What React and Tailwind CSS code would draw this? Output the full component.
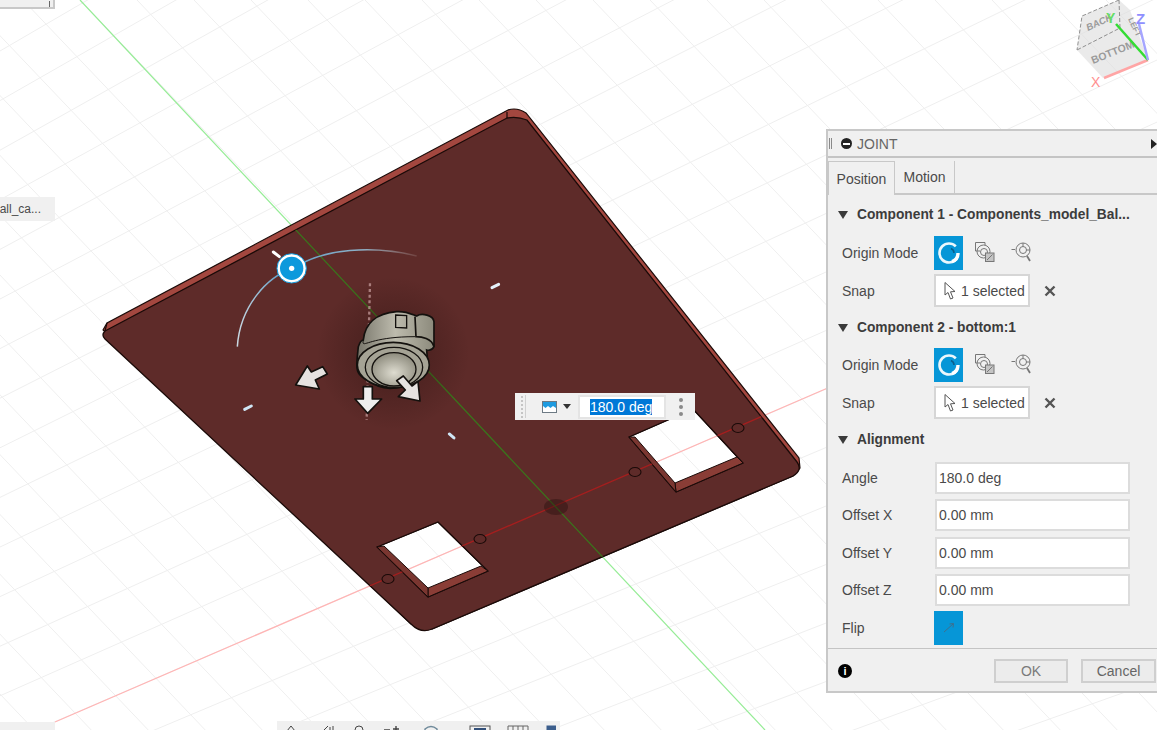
const FONT = "font-['Liberation_Sans',Arial,sans-serif]";

function gridLines() {
  const lines = [];
  // family running up to the right, fans out from a far vanishing point
  for (let k = -3; k < 30; k++) {
    const y0 = 51 + 49.6 * k;
    const slope = (y0 - 2730) / 4600;
    lines.push([0, y0, 1157, y0 + 1157 * slope]);
  }
  // family running down to the right
  for (let k = -16; k < 22; k++) {
    const x0 = 80 + 57 * k;
    lines.push([x0, 0, x0 + 730 / 1.05, 730]);
  }
  return lines;
}

const plateFace =
  "M105 331 L507 118 Q517 116 527 120 L797 462 Q803 470 793 476 L432 629 Q421 634 411 624 L105 339 Q101 335 105 331 Z";
const plateRim =
  "M103 330 L107 323 L508 110 Q517 107 526 113 L799 458 L800 468 L793 476 L432 629 L411 624 Z";
const cutouts =
  " M377 547 L438 522 L488 571 L428 597 Z M629 437 L693 409 L743 463 L676 492 Z";

function Scene() {
  return (
    <svg className="block" width="1157" height="730" viewBox="0 0 1157 730">
      <defs>
        <clipPath id="plateClip">
          <path d={plateFace + cutouts} clipRule="evenodd" />
        </clipPath>
        <radialGradient id="shade" cx="0.5" cy="0.5" r="0.5">
          <stop offset="0%" stopColor="#1c0a08" stopOpacity="0.42" />
          <stop offset="100%" stopColor="#1c0a08" stopOpacity="0" />
        </radialGradient>
        <radialGradient id="partFace" cx="0.5" cy="0.6" r="0.6">
          <stop offset="0%" stopColor="#dedcd0" />
          <stop offset="100%" stopColor="#8c8a7c" />
        </radialGradient>
        <linearGradient id="partBody" x1="0" y1="0" x2="1" y2="0">
          <stop offset="0%" stopColor="#77756a" />
          <stop offset="50%" stopColor="#bdbbad" />
          <stop offset="100%" stopColor="#8c8a7c" />
        </linearGradient>
        <linearGradient id="arcFade" x1="0" y1="0" x2="1" y2="0">
          <stop offset="0%" stopColor="#c9d8e2" />
          <stop offset="25%" stopColor="#5e9cc4" />
          <stop offset="70%" stopColor="#8fb2c8" />
          <stop offset="100%" stopColor="#b9a6a4" stopOpacity="0.2" />
        </linearGradient>
      </defs>

      <rect width="1157" height="730" fill="#ffffff" />
      {gridLines().map(([x1, y1, x2, y2], i) => (
        <line key={i} x1={x1} y1={y1} x2={x2} y2={y2} stroke="#efefef" strokeWidth="1" />
      ))}
      <line x1="55" y1="722" x2="830" y2="387" stroke="#ffb4b4" strokeWidth="1.2" />
      <line x1="80" y1="0" x2="765" y2="730" stroke="#95ec95" strokeWidth="1.2" />

      {/* plate rim, holes stay open so the axis shows through */}
      <path d={plateRim + cutouts} fillRule="evenodd" fill="#a3473f" stroke="#1a0a08" strokeWidth="1.2" />
      <path d={plateFace + cutouts} fillRule="evenodd" fill="#5e2b29" stroke="#1a0a08" strokeWidth="1.3" />
      <path d="M428 597 L428 588 L481 566 L488 571 Z" fill="#8a3d36" stroke="#1a0a08" />
      <path d="M377 547 L384 546 L428 588 L428 597 Z" fill="#7a3630" stroke="#1a0a08" />
      <path d="M676 492 L675 483 L737 457 L743 463 Z" fill="#8a3d36" stroke="#1a0a08" />
      <path d="M629 437 L635 437 L675 483 L676 492 Z" fill="#7a3630" stroke="#1a0a08" />
      <line x1="507" y1="112" x2="507" y2="118" stroke="#1a0a08" strokeWidth="1.2" />
      <line x1="107" y1="323" x2="105" y2="331" stroke="#1a0a08" strokeWidth="1.2" />

      <g clipPath="url(#plateClip)">
        <line x1="55" y1="722" x2="830" y2="387" stroke="#a51e1e" strokeWidth="1.3" />
        <line x1="80" y1="0" x2="765" y2="730" stroke="#39761c" strokeWidth="1.2" />
      </g>

      {/* holes */}
      <ellipse cx="388" cy="579" rx="6" ry="4.5" fill="#5e2b29" stroke="#1a0a08" strokeWidth="1.1" />
      <ellipse cx="480" cy="539" rx="6" ry="4.5" fill="#5e2b29" stroke="#1a0a08" strokeWidth="1.1" />
      <ellipse cx="635" cy="472" rx="6" ry="4.5" fill="#5e2b29" stroke="#1a0a08" strokeWidth="1.1" />
      <ellipse cx="738" cy="428" rx="6" ry="4.5" fill="#5e2b29" stroke="#1a0a08" strokeWidth="1.1" />
      <ellipse cx="556" cy="507" rx="12" ry="8" fill="#2a1210" fillOpacity="0.45" />

      {/* gizmo, drawn in 3x coordinates */}
      <g transform="translate(230 240) scale(0.3333)">
        <circle cx="490" cy="340" r="230" fill="url(#shade)" />
        <path d="M22 320 C30 200 110 110 190 85 C280 25 430 15 560 48" fill="none" stroke="url(#arcFade)" strokeWidth="4.5" />
        <line x1="420" y1="130" x2="410" y2="540" stroke="#c49a9a" strokeWidth="7" strokeDasharray="9 8" opacity="0.75" />
        <path
          d="M400 300 C405 250 440 220 500 215 C530 213 550 225 560 228 C575 218 610 225 612 245 L612 320 C605 335 590 330 590 330 L595 385 C585 420 530 445 480 445 C440 445 410 420 395 410 C375 395 380 370 385 320 C390 305 395 300 400 300 Z"
          fill="url(#partBody)"
          stroke="#14110e"
          strokeWidth="5"
        />
        <path d="M497 225 L530 227 L530 264 L497 262 Z" fill="none" stroke="#14110e" strokeWidth="4" />
        <path d="M555 230 L558 290 C575 290 605 295 612 320" fill="none" stroke="#14110e" strokeWidth="5" />
        <path d="M400 300 C395 330 410 290 555 290" fill="none" stroke="#14110e" strokeWidth="3" />
        <ellipse cx="490" cy="375" rx="108" ry="68" fill="#a5a395" stroke="#14110e" strokeWidth="5" />
        <ellipse cx="492" cy="382" rx="86" ry="60" fill="#a5a395" stroke="#14110e" strokeWidth="4" />
        <ellipse cx="492" cy="388" rx="66" ry="50" fill="url(#partFace)" stroke="#14110e" strokeWidth="4" />

        <path d="M197 435 L232 378 L244 396 L278 380 L292 402 L256 420 L268 447 Z" fill="#e6e3e1" stroke="#14110e" strokeWidth="5" strokeLinejoin="round" />
        <path d="M413 520 L375 477 L400 477 L400 440 L427 440 L427 477 L455 477 Z" fill="#eeeeee" stroke="#14110e" strokeWidth="5" strokeLinejoin="round" />
        <path d="M570 483 L505 470 L526 450 L500 422 L520 408 L546 438 L564 424 Z" fill="#e6e3e1" stroke="#14110e" strokeWidth="5" strokeLinejoin="round" />

        <circle cx="185" cy="85" r="44" fill="#ffffff" stroke="#0c99dc" strokeWidth="3" />
        <circle cx="185" cy="85" r="35" fill="#0c99dc" />
        <circle cx="185" cy="85" r="8" fill="#ffffff" />

        <line x1="130" y1="36" x2="148" y2="50" stroke="#ffffff" strokeWidth="9" strokeLinecap="round" />
        <line x1="786" y1="143" x2="806" y2="133" stroke="#e4f2fb" strokeWidth="9" strokeLinecap="round" />
        <line x1="44" y1="508" x2="64" y2="498" stroke="#cfe6f5" strokeWidth="9" strokeLinecap="round" />
        <line x1="658" y1="582" x2="672" y2="594" stroke="#cfe6f5" strokeWidth="9" strokeLinecap="round" />
      </g>

      {/* view cube */}
      <g fontFamily="'Liberation Sans',Arial,sans-serif">
        <path d="M1119 0 L1082 16 L1077 50 L1103 78 L1148 60 L1130 10 Z" fill="#dcdcdc" fillOpacity="0.6" />
        <path d="M1119 0 L1120 28 L1077 50 M1120 28 L1148 60 M1119 0 L1082 16 L1077 50" fill="none" stroke="#777777" strokeWidth="0.8" strokeDasharray="4 2" />
        <text x="1088" y="31" fontSize="9.5" fontStyle="italic" fontWeight="700" fill="#9a9a9a" transform="rotate(-25 1088 31)">BACK</text>
        <text x="1093" y="64" fontSize="10.5" fontWeight="700" fill="#9a9a9a" transform="rotate(-22 1093 64)">BOTTOM</text>
        <text x="1128" y="19" fontSize="8" fontWeight="700" fill="#9a9a9a" transform="rotate(65 1128 19)">LEFT</text>
        <line x1="1148" y1="60" x2="1104" y2="78" stroke="#ffa5a5" strokeWidth="2.5" />
        <line x1="1148" y1="60" x2="1116" y2="24" stroke="#33dd33" strokeWidth="2.5" />
        <line x1="1148" y1="60" x2="1139" y2="24" stroke="#a5a5ff" strokeWidth="2.5" />
        <text x="1091" y="87" fontSize="14" fill="#ff8f8f">X</text>
        <text x="1106" y="23" fontSize="14" fontWeight="700" fill="#66dd66">Y</text>
        <text x="1136" y="24" fontSize="15" fontWeight="700" fill="#8f8fff">Z</text>
      </g>
    </svg>
  );
}

function OriginIcon() {
  return (
    <svg width="24" height="24" viewBox="0 0 24 24" fill="none">
      <circle cx="12" cy="12" r="9.5" stroke="#ffffff" strokeWidth="2.6" strokeDasharray="49 11" strokeDashoffset="-3" opacity="0.92" />
      <path d="M14 7.5 A5 5 0 0 1 17 12" stroke="#0a5f8c" strokeWidth="1.6" />
      <path d="M21 12 A9 9 0 0 1 15 20.5" stroke="#ffffff" strokeWidth="3.4" />
    </svg>
  );
}

function StackIcon() {
  return (
    <svg width="22" height="22" viewBox="0 0 22 22" fill="none" stroke="#777777" strokeWidth="1">
      <path d="M6 10 L1.5 10 L1.5 1.5 L11 1.5 L11 4" />
      <circle cx="9.5" cy="10.5" r="6.5" />
      <circle cx="10" cy="11" r="3.5" />
      <rect x="11.5" y="12" width="8.5" height="8.5" fill="#c4c4c4" />
      <path d="M13 19 L18.5 13.5" />
    </svg>
  );
}

function SnapIcon() {
  return (
    <svg width="22" height="22" viewBox="0 0 22 22" fill="none" stroke="#777777" strokeWidth="1">
      <path d="M0.5 8.5 L4 8.5" />
      <circle cx="12" cy="9" r="7" />
      <circle cx="12" cy="9" r="3.5" />
      <path d="M12 2 L12 5.5 M15.5 9 L19 9" />
      <path d="M16 15 L19 20" strokeWidth="1.8" />
    </svg>
  );
}

function CursorIcon() {
  return (
    <svg width="14" height="20" viewBox="0 0 14 20" fill="#ffffff" stroke="#555555" strokeWidth="1">
      <path d="M2 1.5 L2 14 L5 11.5 L7.5 18 L10 17 L7.5 10.8 L12 10.5 Z" />
    </svg>
  );
}

function Heading({ children, className }) {
  return (
    <div className={`flex h-5 items-center gap-[9px] pl-[10px] ${className}`}>
      <svg width="10" height="8" viewBox="0 0 10 8">
        <path d="M0 0 L10 0 L5 8 Z" fill="#3a3a3a" />
      </svg>
      <span className="text-[13.75px] font-bold text-[#3c3c3c] whitespace-nowrap">{children}</span>
    </div>
  );
}

function OriginRow({ className }) {
  return (
    <div className={`flex h-[34px] items-center ${className}`}>
      <span className="w-[106px] pl-[14px] text-sm text-[#4a4a4a] whitespace-nowrap">Origin Mode</span>
      <div className="flex h-[34px] w-[29px] items-center justify-center bg-[#0696d7]">
        <OriginIcon />
      </div>
      <div className="ml-[11px] -mt-[2px]">
        <StackIcon />
      </div>
      <div className="ml-[15px] -mt-[2px]">
        <SnapIcon />
      </div>
    </div>
  );
}

function SnapRow({ className }) {
  return (
    <div className={`flex h-[33px] items-center ${className}`}>
      <span className="w-[106px] pl-[14px] text-sm text-[#4a4a4a]">Snap</span>
      <div className="flex h-[33px] w-[96px] items-center border-2 border-[#d6d6d6] bg-white pl-[7px]">
        <CursorIcon />
        <span className="ml-[4px] text-sm text-[#4a4a4a] whitespace-nowrap">1 selected</span>
      </div>
      <svg className="ml-[14px]" width="12" height="12" viewBox="0 0 12 12">
        <path d="M1.5 1.5 L10.5 10.5 M10.5 1.5 L1.5 10.5" stroke="#555555" strokeWidth="2.4" />
      </svg>
    </div>
  );
}

function FieldRow({ label, value, className }) {
  return (
    <div className={`flex h-8 items-center ${className}`}>
      <span className="w-[107px] pl-[14px] text-sm text-[#4a4a4a]">{label}</span>
      <div className="flex h-8 w-[195px] items-center border-2 border-[#dcdcdc] bg-white pl-[2px] text-sm text-[#4a4a4a]">
        {value}
      </div>
    </div>
  );
}

function JointPanel() {
  return (
    <div className={`absolute left-[826px] top-[129px] flex h-[564px] w-[331px] flex-col border-2 border-r-0 border-[#c8c8c8] bg-[#f0f0f0] ${FONT}`}>
      <div className="flex h-[27px] shrink-0 items-center border-b-2 border-[#c4c4c4] pl-[1px]">
        <div className="h-[11px] w-[3px] border-x border-[#8a8a8a]" />
        <div className="relative ml-[9px] h-[11px] w-[11px] rounded-full bg-[#222222]">
          <div className="absolute left-[2px] top-[4.5px] h-[2px] w-[7px] bg-white" />
        </div>
        <span className="ml-[5px] text-sm text-[#666666]">JOINT</span>
        <svg className="ml-auto mr-0" width="6" height="10" viewBox="0 0 6 10">
          <path d="M0 0 L6 5 L0 10 Z" fill="#222222" />
        </svg>
      </div>

      <div className="mt-[2px] flex h-[35px] shrink-0 items-stretch border-b-2 border-[#c8c8c8] pt-[1px]">
        <div className="-mb-[2px] flex w-[67px] items-center justify-center border-x border-t border-[#c8c8c8] bg-[#f0f0f0] text-sm text-[#4a4a4a]">
          Position
        </div>
        <div className="flex w-[60px] items-center justify-center border-r border-[#c8c8c8] text-sm text-[#4a4a4a]">
          Motion
        </div>
      </div>

      <Heading className="mt-[10px]">Component 1 - Components_model_Bal...</Heading>
      <OriginRow className="mt-[11px]" />
      <SnapRow className="mt-[4px]" />
      <Heading className="mt-[11px]">Component 2 - bottom:1</Heading>
      <OriginRow className="mt-[10px]" />
      <SnapRow className="mt-[4px]" />
      <Heading className="mt-[11px]">Alignment</Heading>
      <FieldRow label="Angle" value="180.0 deg" className="mt-[12px]" />
      <FieldRow label="Offset X" value="0.00 mm" className="mt-[5px]" />
      <FieldRow label="Offset Y" value="0.00 mm" className="mt-[6px]" />
      <FieldRow label="Offset Z" value="0.00 mm" className="mt-[5px]" />
      <div className="mt-[5px] flex h-[34px] items-center">
        <span className="w-[106px] pl-[14px] text-sm text-[#4a4a4a]">Flip</span>
        <div className="flex h-[34px] w-[29px] items-center justify-center bg-[#0696d7]">
          <svg width="12" height="12" viewBox="0 0 12 12" fill="none">
            <path d="M1 10 L10 2 M6.5 2 L10.5 1.5 L10 5.5" stroke="#3f6f8c" strokeWidth="1" />
          </svg>
        </div>
      </div>

      <div className="mt-[3px] flex flex-1 items-center border-t border-[#c4c4c4] pl-[10px] pt-[2px]">
        <div className="flex h-[14px] w-[14px] items-center justify-center rounded-full bg-black text-[11px] font-bold leading-none text-white">
          i
        </div>
        <div className="ml-[142px] flex h-6 w-[74px] items-center justify-center border-2 border-[#cfcfcf] bg-[#ececec] text-sm text-[#7a7a7a]">
          OK
        </div>
        <div className="ml-[13px] flex h-6 w-[75px] items-center justify-center border-2 border-[#cfcfcf] bg-[#ececec] text-sm text-[#666666]">
          Cancel
        </div>
      </div>
    </div>
  );
}

function AnglePopup() {
  return (
    <div className={`absolute left-[515px] top-[393px] flex h-[27px] w-[180px] items-center bg-[#f0f0f0] ${FONT}`}>
      <div className="ml-[5px] h-[23px] w-[6px] border-r border-[#d0d0d0] [background-image:radial-gradient(#c4c4c4_1px,transparent_1px)] [background-size:4px_4px]" />
      <svg className="ml-[16px]" width="15" height="12" viewBox="0 0 15 12">
        <rect width="15" height="12" fill="#6d7a84" />
        <rect x="1" y="1" width="13" height="10" fill="#1e9be0" />
        <path d="M1 5 L3.5 7 L6 5 L8.5 7 L11 5 L14 7 L14 11 L1 11 Z" fill="#ffffff" />
      </svg>
      <svg className="ml-[6px]" width="8" height="5" viewBox="0 0 8 5">
        <path d="M0 0 L8 0 L4 5 Z" fill="#333333" />
      </svg>
      <div className="ml-[7px] flex h-6 w-[88px] items-center border-2 border-[#e4e4e4] bg-white pl-[10px] text-sm leading-none">
        <span className="bg-[#0078d7] py-px text-white whitespace-nowrap">180.0 deg</span>
      </div>
      <div className="ml-[13px] flex flex-col gap-[3px]">
        <div className="h-1 w-1 rounded-full bg-[#8a8a8a]" />
        <div className="h-1 w-1 rounded-full bg-[#8a8a8a]" />
        <div className="h-1 w-1 rounded-full bg-[#8a8a8a]" />
      </div>
    </div>
  );
}

function BottomToolbar() {
  return (
    <div className="absolute left-[277px] top-[721px] flex h-[9px] w-[283px] items-start overflow-hidden bg-[#f0f0f0] pl-[9px] pt-[4px]">
      <svg width="270" height="10" viewBox="0 0 270 10" fill="none" stroke="#444444" strokeWidth="1">
        <path d="M1 6 L5 1 L9 6" />
        <path d="M38 5 L42 1 M44 2 L44 8 M47 1 L47 8" />
        <path d="M68 8 L70 2 L73 1 L76 2 L78 8" />
        <path d="M98 5 L104 5 M110 1 L110 8 M107 4 L113 4" strokeWidth="1.4" />
        <path d="M139 8 L139 4 Q145 -1 151 4 L151 8" stroke="#6f8a9a" strokeWidth="1.5" />
        <rect x="184" y="1" width="20" height="10" stroke="#555555" />
        <path d="M188 4 L200 4" stroke="#33507a" strokeWidth="2" />
        <path d="M222 8 L222 1 L242 1 L242 8 M227 1 L227 8 M232 1 L232 8 M237 1 L237 8" stroke="#666666" />
        <rect x="261" y="1" width="9" height="10" fill="#3c5e8c" stroke="#3c5e8c" />
      </svg>
    </div>
  );
}

export default function App() {
  return (
    <div className={`relative h-[730px] w-[1157px] overflow-hidden bg-white ${FONT}`}>
      <Scene />

      <div className="absolute left-0 top-0 flex h-[9px] w-[55px] items-end justify-end border-b-2 border-r-2 border-[#c8c8c8] bg-[#f0f0f0] pr-[3px]">
        <div className="h-[6px] w-px bg-[#666666]" />
      </div>
      <div className="absolute left-0 top-[197px] flex h-[24px] w-[55px] items-center justify-end bg-[#f0f0f0] pr-[14px] text-xs text-[#4a4a4a] whitespace-nowrap">
        all_ca...
      </div>
      <div className="absolute left-0 top-[722px] h-2 w-[55px] bg-[#f0f0f0]" />

      <AnglePopup />
      <BottomToolbar />
      <JointPanel />
    </div>
  );
}
